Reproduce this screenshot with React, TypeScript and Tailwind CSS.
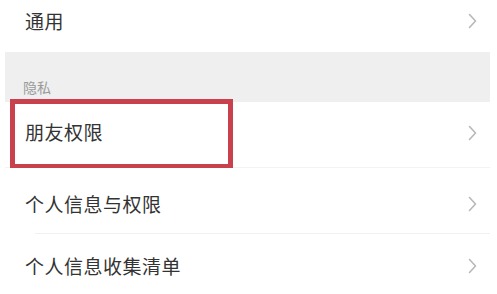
import React from "react";

const Chevron = () => (
  <svg width="11" height="16" viewBox="0 0 11 16" fill="none" className="shrink-0">
    <path d="M2.5 1.5 L8.5 8 L2.5 14.5" stroke="#b8b8b8" strokeWidth="1.6" strokeLinecap="round" strokeLinejoin="round" />
  </svg>
);

function Row({ label, className = "", divider = false, children }: { label: string; className?: string; divider?: boolean; children?: React.ReactNode }) {
  return (
    <div className={`relative flex items-center justify-between pl-[20px] pr-[12px] bg-white ${className}`}>
      <span className="text-[19px] text-[#333333] tracking-[0.5px]">{label}</span>
      <Chevron />
      {divider && <div className="absolute bottom-0 left-[30px] right-0 h-px bg-[#f0f0f0]" />}
      {children}
    </div>
  );
}

export default function App() {
  return (
    <div
      className="w-[497px] h-[294px] bg-white overflow-hidden pl-[5px] pr-[7px]"
      style={{ fontFamily: '"Noto Sans CJK SC", "Noto Sans", sans-serif' }}
    >
      <Row label="通用" className="h-[52px] pb-[10px]" />
      <div className="h-[50px] bg-[#efefef] flex items-end pl-[18px] pb-[4px]">
        <span className="text-[14px] text-[#9a9a9a]">隐私</span>
      </div>
      <Row label="朋友权限" className="h-[66px] pb-[4px] border-b border-[#f3f3f3]">
        {/* red highlight annotation */}
        <div className="absolute left-[5px] top-[-3px] w-[223px] h-[70px] border-[5px] border-[#c9414c]" />
      </Row>
      <Row label="个人信息与权限" className="h-[66px] pt-[6px]" divider />
      <Row label="个人信息收集清单" className="h-[66px] pb-[2px]" />
    </div>
  );
}
